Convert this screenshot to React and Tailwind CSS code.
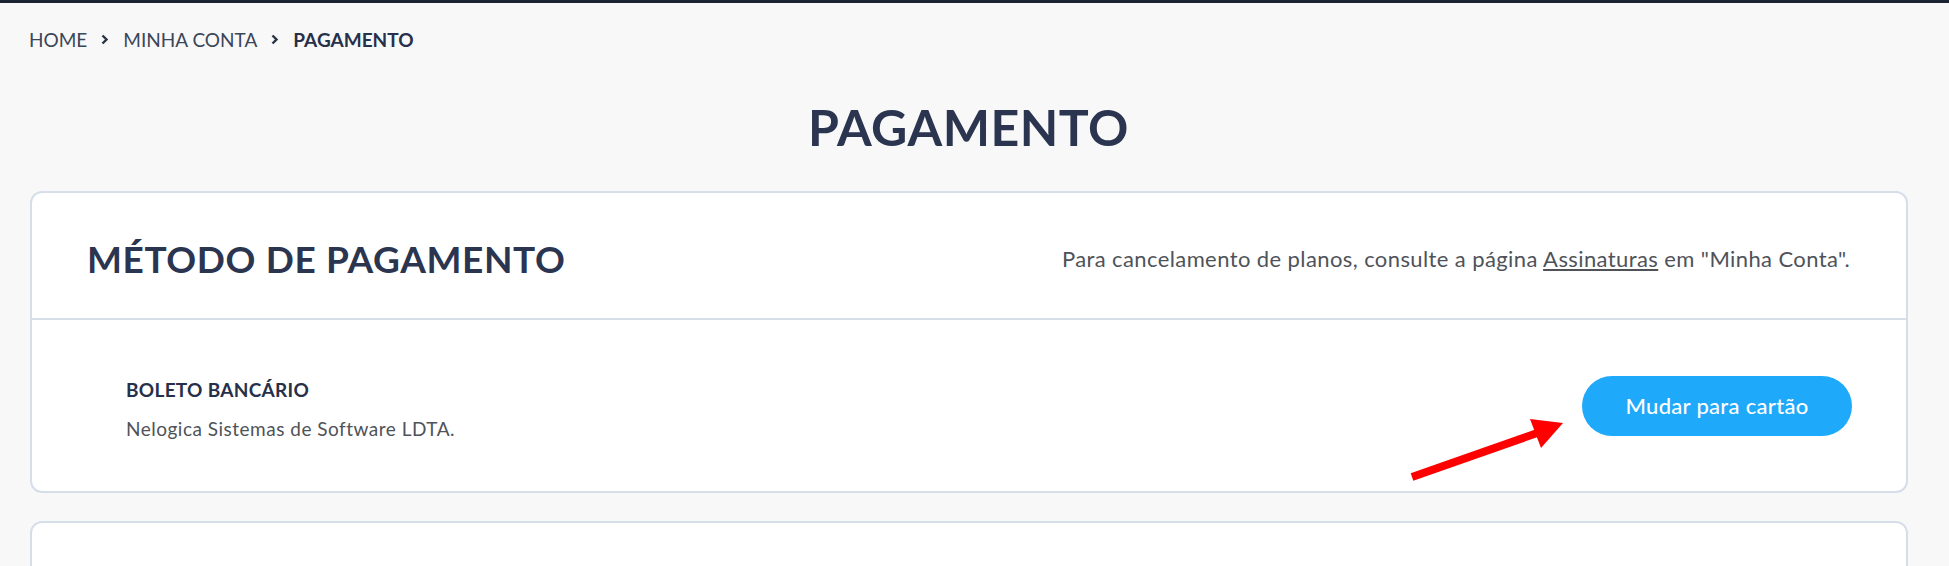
import React from "react";

function Chevron() {
  return (
    <svg width="8" height="11" viewBox="0 0 8 11" className="mx-[14px] shrink-0">
      <path d="M1.5 1.5 L5.5 5.5 L1.5 9.5" fill="none" stroke="#2a3247" strokeWidth="2.4" />
    </svg>
  );
}

export default function App() {
  return (
    <div className="relative min-h-[566px] w-[1949px] bg-[#f8f8f8] font-['Lato','Liberation_Sans',sans-serif] overflow-hidden">
      <div className="h-[3px] bg-[#1c2333]" />
      <div className="pl-[29px] pr-[41px]">
        <nav className="flex items-center h-[20px] mt-[26px] text-[19px] leading-none uppercase">
          <span className="text-[#3b4659]">Home</span>
          <Chevron />
          <span className="text-[#3b4659]">Minha Conta</span>
          <Chevron />
          <span className="font-bold text-[#27304a]">Pagamento</span>
        </nav>
        <h1 className="mt-[53px] text-center text-[50px] leading-none font-bold text-[#2b3550] tracking-[0.5px]">
          PAGAMENTO
        </h1>
        <div className="mt-[39px] ml-px rounded-[12px] border-2 border-[#d6dee9] bg-white">
          <div className="flex items-center justify-between h-[127px] pl-[55px] pr-[56px] pt-[6px] border-b-2 border-[#d6dee9]">
            <h2 className="text-[37px] leading-none font-bold text-[#2b3550] tracking-[0.6px]">
              MÉTODO DE PAGAMENTO
            </h2>
            <p className="text-[22px] tracking-[0.4px] text-[#4f5359]">
              Para cancelamento de planos, consulte a página{" "}
              <span className="underline underline-offset-2">Assinaturas</span> em "Minha Conta".
            </p>
          </div>
          <div className="flex items-center justify-between h-[171px] pl-[94px] pr-[54px]">
            <div className="flex flex-col gap-[20px] pt-[6px]">
              <span className="text-[19px] leading-none font-bold tracking-[0.3px] text-[#27304a]">BOLETO BANCÁRIO</span>
              <span className="text-[19px] leading-none tracking-[0.5px] text-[#4f5359]">Nelogica Sistemas de Software LDTA.</span>
            </div>
            <button className="h-[60px] w-[270px] rounded-full bg-[#1fa9fb] text-white text-[22px] tracking-[0.3px] font-medium">
              Mudar para cartão
            </button>
          </div>
        </div>
        <div className="mt-[28px] ml-px h-[120px] rounded-[12px] border-2 border-[#d6dee9] bg-white" />
      </div>
      <svg className="absolute left-0 top-0 pointer-events-none" width="1949" height="566" viewBox="0 0 1949 566">
        <line x1="1412" y1="477" x2="1540" y2="432" stroke="#ff0000" strokeWidth="8" />
        <polygon points="1563,423 1530,419 1541,448" fill="#ff0000" />
      </svg>
    </div>
  );
}
